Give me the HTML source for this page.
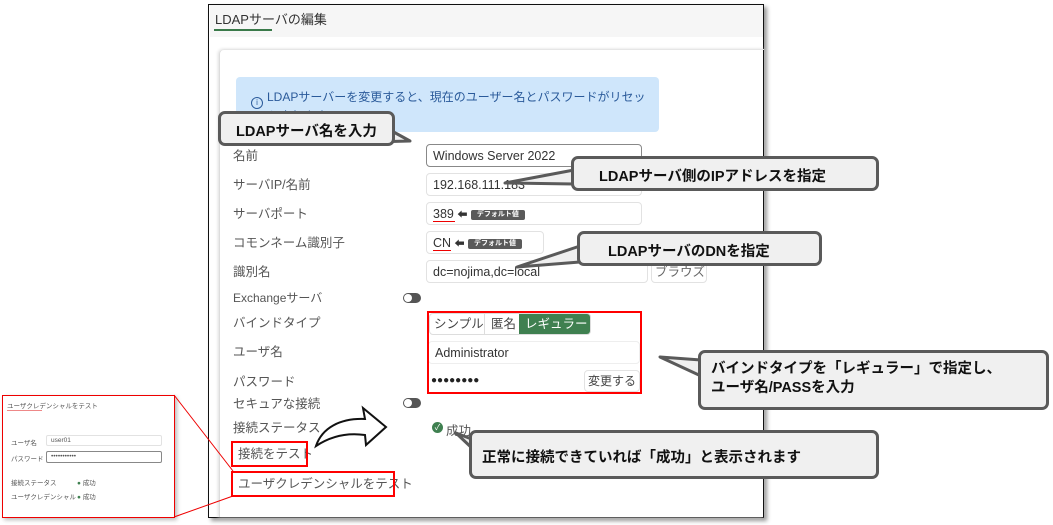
<!DOCTYPE html>
<html><head><meta charset="utf-8"><style>
*{margin:0;padding:0;box-sizing:border-box}
body{width:1053px;height:525px;background:#fff;position:relative;overflow:hidden;font-family:"Liberation Sans","Noto Sans CJK JP",sans-serif;color:#444}
.a{position:absolute}
.lbl{position:absolute;left:233px;font-size:12.5px;color:#555;line-height:16px;white-space:nowrap}
.inp{position:absolute;left:426px;width:216px;height:23px;border:1px solid #e2e2e2;border-radius:4px;font-size:12.5px;color:#333;padding:3px 6px;line-height:16px;background:#fff;white-space:nowrap}
.tag{display:inline-block;background:#5a5a5a;color:#fff;font-size:7px;font-weight:bold;border-radius:2px;padding:0 6px;height:10px;line-height:10px;vertical-align:middle}
.tog{position:absolute;left:403px;width:18px;height:10px;border-radius:5px;background:#555}
.tog:after{content:"";position:absolute;left:1px;top:1px;width:8px;height:8px;border-radius:50%;background:#fff}
.co{position:absolute;background:#f0f0f0;border:3px solid #5a5a5a;border-radius:7px;font-weight:bold;color:#111;font-size:14.5px;white-space:nowrap}
.red{position:absolute;border:2.5px solid #f00}
</style></head><body>
<div class="a" style="left:208px;top:4px;width:556px;height:514px;border:1.5px solid #111;box-shadow:3px 3px 4px #999;background:#fff"></div>
<div class="a" style="left:210px;top:5px;width:553px;height:32px;background:#f6f6f6"></div>
<div class="a" style="left:215px;top:9px;font-size:13px;color:#333">LDAPサーバの編集</div>
<div class="a" style="left:214px;top:29px;width:58px;height:2px;background:#3a7a4a"></div>
<div class="a" style="left:219px;top:49px;width:545px;height:468px;border-left:1px solid #ddd;border-top:1px solid #e6e6e6;border-radius:5px 0 0 0;box-shadow:-1px 0 3px #ddd"></div>
<div class="a" style="left:236px;top:77px;width:423px;height:55px;background:#cfe6fb;border-radius:4px;overflow:hidden">
 <div class="a" style="left:15px;top:20px;width:12px;height:12px;border:1px solid #2a5a9a;border-radius:50%;font-size:8px;color:#2a5a9a;text-align:center;line-height:10px">i</div>
 <div class="a" style="left:31px;top:11px;width:382px;font-size:12px;color:#2a5a9a;line-height:19px">LDAPサーバーを変更すると、現在のユーザー名とパスワードがリセットされます</div>
</div>
<div class="lbl" style="top:148px">名前</div>
<div class="lbl" style="top:177px">サーバIP/名前</div>
<div class="lbl" style="top:206px">サーバポート</div>
<div class="lbl" style="top:235px">コモンネーム識別子</div>
<div class="lbl" style="top:264px">識別名</div>
<div class="lbl" style="top:290px;font-size:12px">Exchangeサーバ</div>
<div class="lbl" style="top:315px">バインドタイプ</div>
<div class="lbl" style="top:344px">ユーザ名</div>
<div class="lbl" style="top:374px">パスワード</div>
<div class="lbl" style="top:396px">セキュアな接続</div>
<div class="lbl" style="top:420px">接続ステータス</div>
<div class="lbl" style="left:238px;top:446px">接続をテスト</div>
<div class="lbl" style="left:238px;top:476px">ユーザクレデンシャルをテスト</div>
<div class="inp" style="top:144px;border-color:#888">Windows Server 2022</div>
<div class="inp" style="top:173px">192.168.111.183</div>
<div class="inp" style="top:202px">389 <span style="font-size:10px">⬅</span> <span class="tag">デフォルト値</span><div class="a" style="left:6px;top:18px;width:22px;height:1px;background:#e00"></div></div>
<div class="inp" style="top:231px;width:118px">CN <span style="font-size:10px">⬅</span> <span class="tag">デフォルト値</span><div class="a" style="left:6px;top:18px;width:18px;height:1px;background:#e00"></div></div>
<div class="inp" style="top:260px;width:222px">dc=nojima,dc=local</div>
<div class="inp" style="top:260px;left:651px;width:56px;color:#666;padding:3px 3px;text-align:center">ブラウズ</div>
<div class="tog" style="top:293px"></div>
<div class="tog" style="top:398px"></div>
<div class="a" style="left:429px;top:313px;width:162px;height:22px;border:1px solid #ddd;border-radius:4px;overflow:hidden;font-size:12.5px;line-height:20px;white-space:nowrap">
 <span class="a" style="left:4px;color:#444">シンプル</span>
 <span class="a" style="left:54px;top:0;width:1px;height:22px;background:#ddd"></span>
 <span class="a" style="left:61px;color:#444">匿名</span>
 <span class="a" style="left:89px;top:0;width:73px;height:22px;background:#3f8050;color:#fff;padding-left:6px">レギュラー</span>
</div>
<div class="inp" style="top:341px;left:428px;width:212px;border-color:#eee">Administrator</div>
<div class="a" style="left:431px;top:375px;font-size:10px;color:#222">●●●●●●●●</div>
<div class="a" style="left:584px;top:370px;width:56px;height:22px;border:1px solid #e2e2e2;border-radius:4px;font-size:12px;color:#444;text-align:center;line-height:20px">変更する</div>
<div class="a" style="left:432px;top:422px;width:11px;height:11px;border-radius:50%;background:#3f8050;color:#fff;font-size:8px;text-align:center;line-height:11px">✓</div>
<div class="a" style="left:446px;top:420px;font-size:12.5px;color:#555">成功</div>
<div class="red" style="left:427px;top:311px;width:215px;height:83px"></div>
<div class="red" style="left:231px;top:441px;width:77px;height:26px"></div>
<div class="red" style="left:231px;top:471px;width:164px;height:26px"></div>
<div class="a" style="left:2px;top:395px;width:173px;height:123px;border:1px solid #e00;background:#fff;box-shadow:2px 2px 4px #bbb;font-size:6.5px;color:#555;white-space:nowrap">
 <div class="a" style="left:4px;top:4px">ユーザクレデンシャルをテスト</div>
 <div class="a" style="left:4px;top:14px;width:35px;height:1px;background:#e88"></div>
 <div class="a" style="left:8px;top:41px">ユーザ名</div>
 <div class="a" style="left:43px;top:39px;width:116px;height:11px;border:1px solid #e2e2e2;border-radius:2px;padding-left:4px;line-height:9px">user01</div>
 <div class="a" style="left:8px;top:57px">パスワード</div>
 <div class="a" style="left:43px;top:55px;width:116px;height:12px;border:1px solid #888;border-radius:2px;padding-left:4px;line-height:9px">•••••••••••</div>
 <div class="a" style="left:8px;top:81px">接続ステータス</div>
 <div class="a" style="left:74px;top:81px"><span style="color:#3f8050">●</span> 成功</div>
 <div class="a" style="left:8px;top:95px">ユーザクレデンシャル</div>
 <div class="a" style="left:74px;top:95px"><span style="color:#3f8050">●</span> 成功</div>
</div>
<svg class="a" style="left:0;top:0" width="1053" height="525">
 <line x1="174" y1="395" x2="233" y2="471" stroke="#e00" stroke-width="1"/>
 <line x1="174" y1="517" x2="233" y2="496" stroke="#e00" stroke-width="1"/>
 <path d="M316 446 C322 428 340 418 365 419 L363 408 L386 427 L366 445 L365 435 C344 432 328 438 316 446 Z" fill="#fff" stroke="#111" stroke-width="2"/>
 <g fill="#f0f0f0" stroke="#5a5a5a" stroke-width="3" stroke-linejoin="round">
  <polygon points="374,142 410,141 390,130"/>
  <polygon points="574,184 505,183 574,170"/>
  <polygon points="580,246 517,267 580,262"/>
  <polygon points="701,360 660,357 701,376"/>
  <polygon points="474,450 456,433 474,440"/>
 </g>
</svg>
<div class="co" style="left:218px;top:111px;width:177px;height:35px;padding:6px 0 0 15px">LDAPサーバ名を入力</div>
<div class="co" style="left:571px;top:156px;width:308px;height:35px;padding:6px 0 0 25px">LDAPサーバ側のIPアドレスを指定</div>
<div class="co" style="left:577px;top:231px;width:245px;height:35px;padding:6px 0 0 28px">LDAPサーバのDNを指定</div>
<div class="co" style="left:698px;top:350px;width:351px;height:60px;padding:7px 0 0 10px;line-height:19px">バインドタイプを「レギュラー」で指定し、<br>ユーザ名/PASSを入力</div>
<div class="co" style="left:469px;top:430px;width:410px;height:49px;padding:13px 0 0 10px">正常に接続できていれば「成功」と表示されます</div>
</body></html>
